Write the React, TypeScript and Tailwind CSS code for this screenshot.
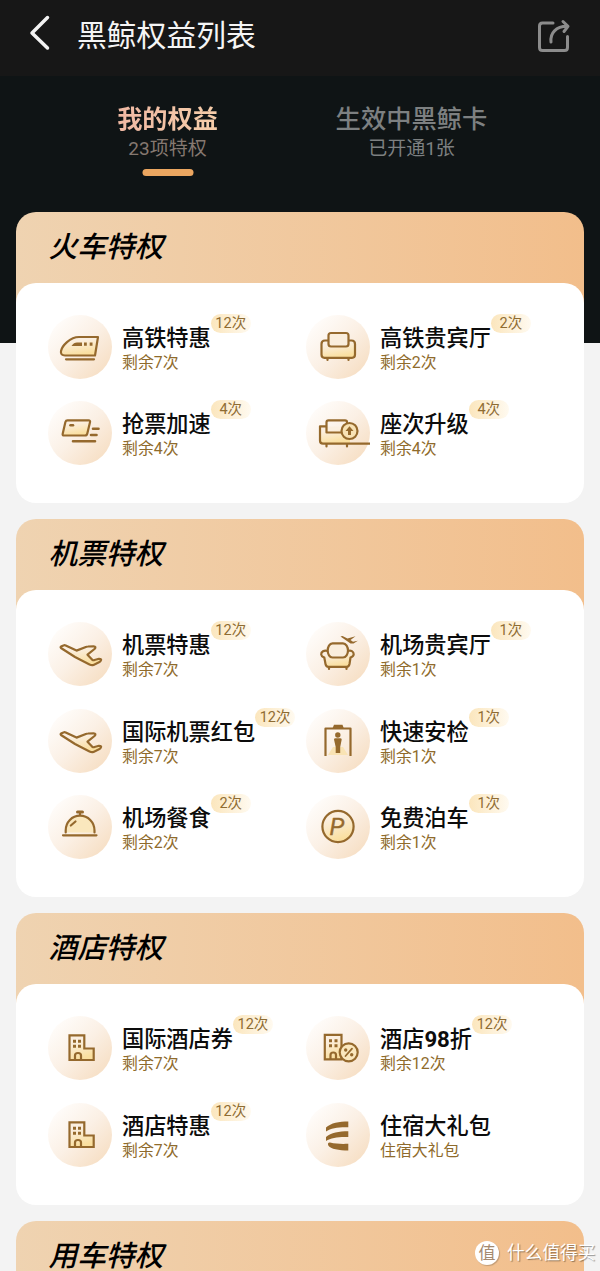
import React from "react";

const BROWN = "#95692d";

type Benefit = {
  icon: React.ReactNode;
  name: React.ReactNode;
  des: string;
  count?: string;
};

const TrainIcon = () => (
  <>
    <path d="M50 22H31C22 22 14 31 13 36C12.500 39 14 40.500 17 40.500H47Z" fill="url(#glow)" />
    <path d="M23.500 31C25 28.500 27 27.500 29 27.500H34V31Z" fill={BROWN} stroke="none" />
    <path d="M36 29.200H38.800M41.700 29.200H44.500" strokeWidth="3.200" strokeLinecap="butt" />
    <path d="M18 44.300H46" />
  </>
);

const SofaIcon = () => (
  <>
    <path d="M22 25.500H19C17 25.500 15.500 26.800 15.500 29V39.500C15.500 41.500 16.500 42.800 18.500 42.800H46C48 42.800 49 41.500 49 39.500V29C49 26.800 47.500 25.500 45.500 25.500H43" fill="url(#glow)" />
    <rect x="22.500" y="18" width="20" height="13.500" rx="2.500" fill="#faeedd" />
    <path d="M21.500 43V45M42.500 43V45" />
  </>
);

const TicketIcon = () => (
  <>
    <path d="M19.500 19.300H40.500Q42.500 19.300 42 21.300L39.300 32.500Q38.900 34.500 37 34.500H16Q14.300 34.500 14.700 32.700L17.400 21Q17.900 19.300 19.500 19.300Z" fill="url(#glow)" />
    <path d="M22.500 24.200H25" strokeWidth="2.600" />
    <path d="M45 27.700H50.500M43 34H48.500M25 40.300H47" strokeWidth="2.600" />
  </>
);

const UpgradeIcon = () => (
  <>
    <path d="M20 25.500H14.500C14 25.500 14 26 14 27V40C14 42 15 42.800 17 42.800H44V25.500Z" fill="url(#glow)" stroke="none" />
    <path d="M20 25.300H14V39.500C14 41.700 15 42.700 17 42.700H64" />
    <path d="M41 23V21Q41 19.300 39 19.300H22.500Q20.500 19.300 20.500 21.300V31.500H35" />
    <path d="M20.500 43V45.500M41 43V45.500" />
    <circle cx="43.500" cy="30" r="8" fill="#f8e2b5" />
    <path d="M43.500 25.200L47.500 30H45V34H42V30H39.500Z" fill={BROWN} stroke="none" />
  </>
);

const PlaneIcon = () => (
  <path
    d="M13 26Q12 25 13.500 24.200L15.500 23.400Q16.500 23 17.700 23.500L28.500 28.600L38.500 24.800Q39.200 24.500 40 24.500L45.500 24.300Q48.800 24.500 46.500 27L39.500 32.700L44.500 38Q45.500 38.500 46.500 38L51 36.800Q54 36.800 52.800 38.500Q52.500 39.500 51.500 40L45.500 43Q43.500 43.500 41.500 42.500L27 35Z"
    fill="url(#glow)"
  />
);

const LoungeIcon = () => (
  <>
    <path d="M22 29C18 27.500 15 30 15.200 32.500C15.400 34.500 17.500 35 18.300 35.500L19.500 42Q20 44.800 22.500 44.800H40.500Q43 44.800 43.500 42L44.500 35.500C46 35 47.700 34 47.700 32.300C47.700 29.500 45 27.700 41.500 29" fill="url(#glow)" />
    <path d="M26.500 21.300H37C40 21.300 42 25 42 28.500C42 32 40 35.500 37 35.500H26.500C23.500 35.500 21.700 32 21.700 28.500C21.700 25 23.500 21.300 26.500 21.300Z" fill="#faeedd" />
    <path d="M23 45V47M40.500 45V47" />
    <path d="M34.500 14.500L36.500 14L41.500 16.500L49.500 14.200L44.500 18L47 19.700L51.800 18.800L47.500 21.500H44.500Z" fill={BROWN} stroke="none" />
  </>
);

const SecurityIcon = () => (
  <>
    <path d="M22 46L27 38H37L42 46Z" fill="#f9e3b4" stroke="none" />
    <path d="M19.500 47V19.500H44.500V47" strokeLinecap="butt" />
    <path d="M26.700 19L28 15.700H36.500L37.700 19Z" fill={BROWN} stroke="none" />
    <circle cx="31.800" cy="26" r="2.700" fill={BROWN} stroke="none" />
    <path d="M28 30.500Q28 29.300 29.500 29.300H34Q35.700 29.300 35.700 30.500L34.200 38V44H29.700V38Z" fill={BROWN} stroke="none" />
  </>
);

const MealIcon = () => (
  <>
    <path d="M17.700 37.500V35.500C17.700 27 24 20.700 32 20.700C40 20.700 46.500 27 46.500 35.500V37.500" fill="#fae7bd" />
    <path d="M29.500 17H34.500" strokeWidth="3" />
    <path d="M32 17.500V20M22.800 30.500L27.500 26.500M15 40.300H48.500" />
  </>
);

const ParkingIcon = () => (
  <>
    <circle cx="32" cy="31.500" r="15.600" fill="url(#glow)" />
    <text x="23.500" y="40" fill={BROWN} stroke={BROWN} strokeWidth="0.400" className="font-['Roboto'] text-[24px] italic">P</text>
  </>
);

const HotelIcon = () => (
  <>
    <path d="M21.500 19.300H36.300V32.500H45.700V44H21.500Z" fill="url(#glow)" strokeLinejoin="miter" />
    <path d="M25 25.300H28M30 25.300H33M25 30.300H28M30 30.300H33" strokeWidth="3" strokeLinecap="butt" />
    <path d="M27 44V39.500Q27 37 30 37Q33 37 33 39.500V44" />
  </>
);

const DiscountIcon = () => (
  <>
    <path d="M18.800 18.800H35.500V43.300H18.800Z" fill="url(#glow)" strokeLinejoin="miter" />
    <path d="M23 24.800H26M28.500 24.800H31.500M23 29.800H26M28.500 29.800H31.500" strokeWidth="3" strokeLinecap="butt" />
    <path d="M24.500 43V39Q24.500 36.500 27.300 36.500Q30 36.500 30 39V43" />
    <circle cx="42.700" cy="36.300" r="9" fill="#fae7bd" />
    <path d="M39.500 40L46 32.700" strokeWidth="1.800" />
    <circle cx="39.700" cy="34" r="1.700" fill={BROWN} stroke="none" />
    <circle cx="45.700" cy="38.800" r="1.700" fill={BROWN} stroke="none" />
  </>
);

const GiftIcon = () => (
  <g fill={BROWN} stroke="none">
    <path d="M20 28.500V24.500C25 20 33 18.500 42.300 18.500V24.300C33 24 25 25 20 28.500Z" />
    <path d="M20 38V34C25 29.700 33 28.300 42.300 28.200V34C33 33.700 25 34.500 20 38Z" />
    <path d="M24 39.500C30 41 36 41 42.300 40.800V47.500C33 47.300 24.500 46.300 22.300 42.500C21.500 40.500 22.300 39.300 24 39.500Z" />
  </g>
);

const sections: { title: string; items: Benefit[] }[] = [
  {
    title: "火车特权",
    items: [
      { icon: <TrainIcon />, name: "高铁特惠", des: "剩余7次", count: "12次" },
      { icon: <SofaIcon />, name: "高铁贵宾厅", des: "剩余2次", count: "2次" },
      { icon: <TicketIcon />, name: "抢票加速", des: "剩余4次", count: "4次" },
      { icon: <UpgradeIcon />, name: "座次升级", des: "剩余4次", count: "4次" },
    ],
  },
  {
    title: "机票特权",
    items: [
      { icon: <PlaneIcon />, name: "机票特惠", des: "剩余7次", count: "12次" },
      { icon: <LoungeIcon />, name: "机场贵宾厅", des: "剩余1次", count: "1次" },
      { icon: <PlaneIcon />, name: "国际机票红包", des: "剩余7次", count: "12次" },
      { icon: <SecurityIcon />, name: "快速安检", des: "剩余1次", count: "1次" },
      { icon: <MealIcon />, name: "机场餐食", des: "剩余2次", count: "2次" },
      { icon: <ParkingIcon />, name: "免费泊车", des: "剩余1次", count: "1次" },
    ],
  },
  {
    title: "酒店特权",
    items: [
      { icon: <HotelIcon />, name: "国际酒店券", des: "剩余7次", count: "12次" },
      {
        icon: <DiscountIcon />,
        name: <>酒店<b className="font-bold">98</b>折</>,
        des: "剩余12次",
        count: "12次",
      },
      { icon: <HotelIcon />, name: "酒店特惠", des: "剩余7次", count: "12次" },
      { icon: <GiftIcon />, name: "住宿大礼包", des: "住宿大礼包" },
    ],
  },
  { title: "用车特权", items: [] },
];

const BenefitItem = ({ icon, name, des, count }: Benefit) => (
  <div className="flex h-16">
    <div className="size-16 shrink-0 rounded-full bg-linear-to-br from-[#fffdfb] from-10% via-[#fbf0e5] to-[#f5dabb]">
      <svg viewBox="0 0 64 64" className="size-16" fill="none" stroke={BROWN} strokeWidth="2.200" strokeLinecap="round" strokeLinejoin="round">
        {icon}
      </svg>
    </div>
    <div className="ml-[10px] whitespace-nowrap">
      <div className="flex h-[36px]">
        <span className="mt-[7px] text-[22.200px] leading-8 font-medium text-[#0c0c0c]">{name}</span>
        {count && (
          <span className="-mt-px h-[19px] w-10 rounded-full bg-linear-to-r from-[#fbe6bd] to-[#fffaf0] text-center text-[14.500px] leading-[19px] text-[#8f6c32]">
            {count}
          </span>
        )}
      </div>
      <p className="text-[15.900px] leading-6 text-[#8f6b2c]">{des}</p>
    </div>
  </div>
);

const App = () => {
  return (
    <div className="relative h-[1271px] w-[600px] overflow-hidden bg-[linear-gradient(#0f1415_343px,#f3f3f3_343px)] font-['Roboto','Noto_Sans_CJK_SC',sans-serif]">
      <svg className="absolute size-0">
        <defs>
          <linearGradient id="glow" x1="0" y1="0" x2="0.300" y2="1">
            <stop offset="0.300" stopColor="#fbefe0" />
            <stop offset="1" stopColor="#fadf9f" />
          </linearGradient>
        </defs>
      </svg>

      <header className="flex h-[76px] items-center bg-[#171717] pr-[29px] pl-[29px]">
        <svg viewBox="0 0 22 36" className="-mt-[11px] h-9 w-[22px]" fill="none" stroke="#f2f2f2" strokeWidth="3.500" strokeLinecap="round" strokeLinejoin="round">
          <path d="M18.500 2.500L3 18L18.500 33" />
        </svg>
        <h1 className="-mt-[5px] ml-[26px] text-[29.800px] leading-10 text-[#f5f5f5]">黑鲸权益列表</h1>
        <svg viewBox="0 0 34 34" className="-mt-1 ml-auto size-[34px]" fill="none" stroke="#8c8c8c" strokeWidth="3" strokeLinecap="round" strokeLinejoin="round">
          <path d="M16 4H5.500Q2.500 4 2.500 7V28.500Q2.500 31.500 5.500 31.500H27.500Q30.500 31.500 30.500 28.500V17.500" />
          <path d="M14 23C13 14 19 7.500 30 7.300M26 2.500L31 7.300L27 12.500" />
        </svg>
      </header>

      <nav className="mx-auto grid h-[135.500px] w-[488px] translate-x-[-10.500px] grid-cols-2 pt-[26px] text-center">
        <div className="flex flex-col items-center">
          <span className="bg-linear-to-r from-[#efb8a3] to-[#f5cda9] bg-clip-text text-[25.200px] leading-9 font-bold text-transparent">我的权益</span>
          <span className="text-[19px] leading-[22px] text-[#857870]">23项特权</span>
          <i className="mt-[9px] h-[7px] w-[51px] rounded-full bg-[#eba660]" />
        </div>
        <div className="flex flex-col items-center">
          <span className="text-[25.300px] leading-9 font-medium text-[#7d8081]">生效中黑鲸卡</span>
          <span className="text-[19px] leading-[22px] text-[#7d8081]">已开通1张</span>
        </div>
      </nav>

      <main className="flex flex-col gap-4 px-4">
        {sections.map(({ title, items }) => (
          <section key={title}>
            <h2 className="h-[93px] rounded-t-[20px] bg-linear-to-r from-[#efd3b1] to-[#f2be8b] pt-5 pl-[32.500px] text-[28.700px] leading-[30px] font-medium text-black italic">
              {title}
            </h2>
            {items.length > 0 && (
              <div className="relative -mt-[22px] grid grid-cols-[258px_1fr] gap-y-[22.500px] rounded-[20px] bg-white px-8 pt-8 pb-[38px]">
                {items.map((item, i) => (
                  <BenefitItem key={i} {...item} />
                ))}
              </div>
            )}
          </section>
        ))}
      </main>

      <div className="absolute top-[1240px] left-[475px] flex items-center gap-2 text-white [text-shadow:1px_1px_1px_#0006]">
        <span className="flex size-6 items-center justify-center rounded-full bg-white text-[17px] leading-6 text-[#a58a70] shadow-[1px_1px_1px_#0003] [text-shadow:none]">值</span>
        <span className="text-[17.700px] leading-[26px] whitespace-nowrap">什么值得买</span>
      </div>
    </div>
  );
};
export default App;
